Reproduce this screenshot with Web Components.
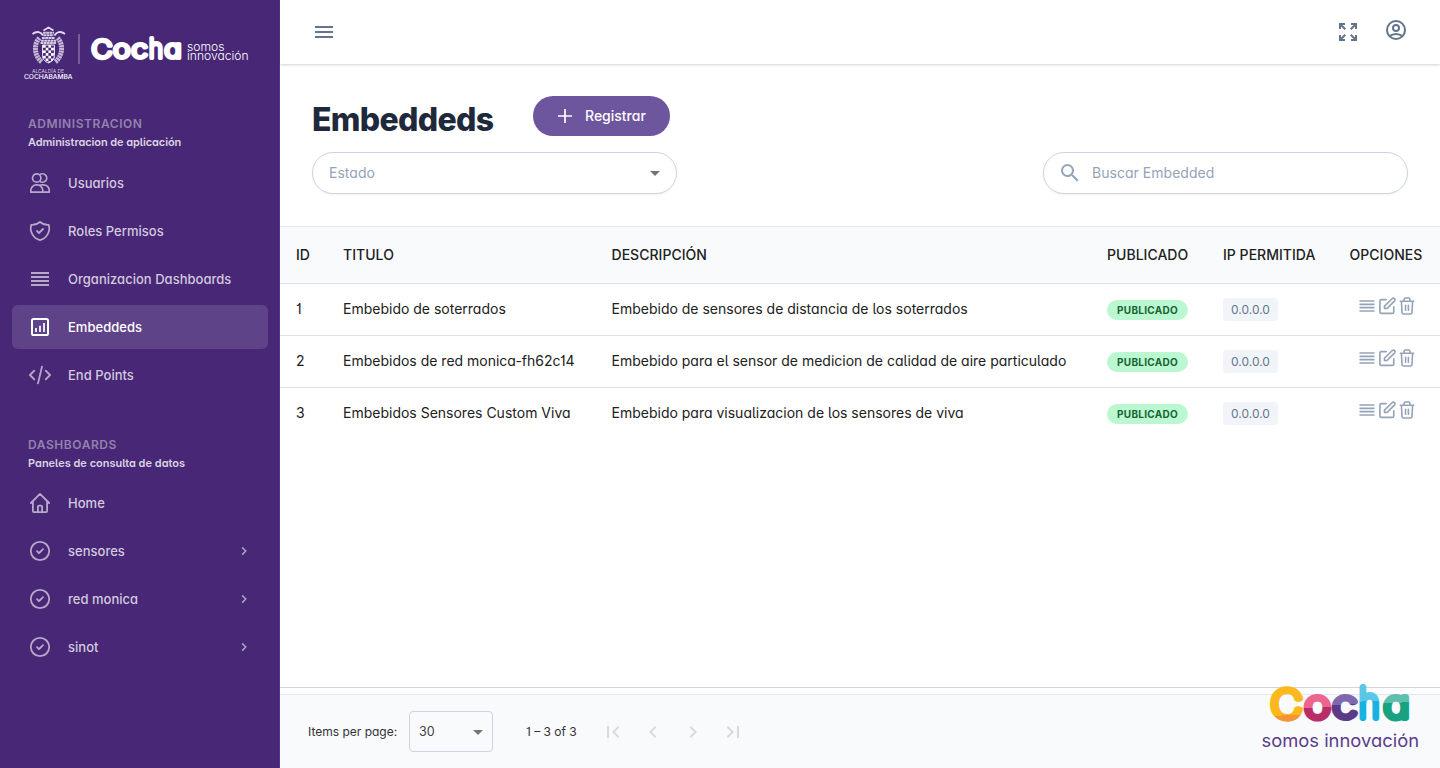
<!DOCTYPE html>
<html lang="es">
<head>
<meta charset="utf-8">
<title>Embeddeds</title>
<style>
  body{margin:0;height:768px;overflow:hidden;background:#fff;color:#1e293b;
    font:400 14px/20px Inter,"Liberation Sans",sans-serif;
    font-feature-settings:"cv11","cv01","cv05"}
</style>
</head>
<body>
<app-shell></app-shell>
<script>
const define=(name,html,init)=>customElements.define(name,class extends HTMLElement{
  constructor(){
    super();
    const t=document.createElement('template');
    t.innerHTML=html;
    this.attachShadow({mode:'open'}).appendChild(t.content.cloneNode(true));
  }
  connectedCallback(){ if(init) init(this,this.shadowRoot); }
});

const ICONS={
  users:'<g fill="none" stroke="currentColor" stroke-width="1.7" stroke-linejoin="round"><circle cx="8.700" cy="7" r="4.200"/><path d="M11.700 3.900A4.200 4.200 0 1 1 11.700 10.100M2.800 21.200v-1.700a5.600 5.600 0 0 1 5.600-5.600h.8a5.600 5.600 0 0 1 5.600 5.600v1.700zM11.500 14.400a5.400 5.400 0 0 1 3.300-.6h.8a5.600 5.600 0 0 1 5.600 5.600v1.800H15"/></g>',
  shield:'<path fill="none" stroke="currentColor" stroke-width="1.8" stroke-linecap="round" stroke-linejoin="round" d="M9 12l2 2 4-4M12 2.900a12 12 0 0 1-8.800 3 12.300 12.300 0 0 0 8.800 15.200 12.300 12.300 0 0 0 8.800-15.200A12 12 0 0 1 12 2.900z"/>',
  lines:'<path fill="currentColor" d="M3 5h18v2H3zm0 4h18v2H3zm0 4h18v2H3zm0 4h18v2H3z"/>',
  chart:'<rect x="4" y="4" width="16" height="16" rx="1.6" fill="none" stroke="currentColor" stroke-width="2"/><path fill="none" stroke="currentColor" stroke-width="1.7" d="M8 17v-4M12 17v-6.3M16 17V8"/>',
  code:'<path fill="none" stroke="currentColor" stroke-width="1.8" stroke-linecap="round" stroke-linejoin="round" d="M6.3 7.6L1.9 12l4.4 4.4M17.7 7.6l4.4 4.4-4.4 4.4M14 3.6l-4 16.8"/>',
  home:'<path fill="none" stroke="currentColor" stroke-width="1.8" stroke-linecap="round" stroke-linejoin="round" d="M2.9 12L12 2.900l9.100 9.100M4.900 10.300v9.800a1 1 0 0 0 1 1h12.200a1 1 0 0 0 1-1v-9.800M9.900 21v-5.400a1 1 0 0 1 1-1h2.200a1 1 0 0 1 1 1V21"/>',
  check:'<path fill="none" stroke="currentColor" stroke-width="1.8" stroke-linecap="round" stroke-linejoin="round" d="M9 12.200l2 2 4-4M21.200 12a9.200 9.200 0 1 1-18.400 0 9.200 9.200 0 0 1 18.400 0z"/>',
  chevron:'<path fill="none" stroke="currentColor" stroke-width="2.300" d="M9.2 6.6L14.6 12l-5.4 5.4"/>',
  menu:'<path fill="currentColor" d="M3 18h18v-2H3v2zm0-5h18v-2H3v2zm0-7v2h18V6H3z"/>',
  expand:'<path fill="currentColor" d="M3 3h6v2H6.400L10 8.600 8.600 10 5 6.400V9H3zM21 3h-6v2h2.600L14 8.600l1.400 1.400L19 6.400V9h2zM3 21h6v-2H6.400l3.600-3.600L8.600 14 5 17.600V15H3zM21 21h-6v-2h2.600L14 15.400l1.400-1.400 3.600 3.600V15h2z"/>',
  user:'<g fill="none" stroke="currentColor" stroke-width="2"><circle cx="12" cy="12" r="9"/><circle cx="12" cy="10" r="3"/><path d="M5.6 18.3C7.3 16.8 9.6 16 12 16s4.700.8 6.4 2.3"/></g>',
  plus:'<path fill="currentColor" d="M19 12.850h-6.150V19h-1.700v-6.150H5v-1.700h6.150V5h1.700v6.150H19z"/>',
  search:'<path fill="currentColor" d="M15.500 14h-.79l-.28-.27A6.471 6.471 0 0 0 16 9.500 6.500 6.500 0 1 0 9.500 16c1.610 0 3.090-.59 4.230-1.570l.27.28v.79l5 4.990L20.490 19l-4.990-5zm-6 0C7.010 14 5 11.990 5 9.500S7.010 5 9.500 5 14 7.010 14 9.500 11.990 14 9.500 14z"/>',
  arrow:'<path fill="currentColor" d="M7 10l5 5 5-5z"/>',
  edit:'<path fill="none" stroke="currentColor" stroke-width="2" stroke-linecap="round" stroke-linejoin="round" d="M11 4.300H5.300a1.800 1.800 0 0 0-1.800 1.800v13a1.800 1.800 0 0 0 1.800 1.800h13a1.800 1.800 0 0 0 1.800-1.800v-6M18.400 3a2 2 0 0 1 2.800 2.800L12 15H9v-3z"/>',
  trash:'<path fill="none" stroke="currentColor" stroke-width="1.900" stroke-linecap="round" stroke-linejoin="round" d="M4 6.300h16M8.500 6V3.800A1.500 1.500 0 0 1 10 2.300h4a1.500 1.500 0 0 1 1.500 1.500V6M5.300 6.500l.7 13.200a2 2 0 0 0 2 1.900h8a2 2 0 0 0 2-1.900l.7-13.200M10.300 11v6M13.700 11v6"/>',
  first:'<path fill="currentColor" d="M18.410 16.590L13.820 12l4.590-4.590L17 6l-6 6 6 6zM6 6h2v12H6z"/>',
  prev:'<path fill="currentColor" d="M15.410 7.410L14 6l-6 6 6 6 1.410-1.410L10.830 12z"/>',
  next:'<path fill="currentColor" d="M10 6L8.590 7.410 13.170 12l-4.580 4.590L10 18l6-6z"/>',
  last:'<path fill="currentColor" d="M5.590 7.410L10.180 12l-4.590 4.590L7 18l6-6-6-6zM16 6h2v12h-2z"/>'
};

define('app-icon','<style>:host{display:block;width:24px;height:24px;flex:none}svg{display:block;width:100%;height:100%}</style><svg viewBox="0 0 24 24"></svg>',
  (el,r)=>{r.querySelector('svg').innerHTML=ICONS[el.getAttribute('name')];});

define('brand-logo',`<style>:host{display:block;height:112px}svg{display:block}text{font-family:Inter,"Liberation Sans",sans-serif;fill:#fff}
.c text{font-size:25px;font-weight:200;stroke:#fff;stroke-width:4.100;stroke-linejoin:round;stroke-linecap:round;text-anchor:middle}</style>
<svg width="279" height="112" viewBox="0 0 279 112">
  <defs><pattern id="k" width="5.400" height="5.400" patternUnits="userSpaceOnUse" x="43" y="45"><rect width="2.700" height="2.700" fill="#fff"/><rect x="2.700" y="2.700" width="2.700" height="2.700" fill="#fff"/></pattern></defs>
  <g fill="none" stroke="#e4dcee">
    <path d="M43 35.500c-2-3.500-6-5-10.500-1.500M54.500 35.500c2-3.500 6-5 10.500-1.500" stroke-width="1.800"/>
    <path d="M39.500 38c-6 6-5.500 18 2.500 24M57.500 38c6 6 5.500 18-2.500 24" stroke-width="5" stroke-dasharray="2.200 .5" stroke-opacity=".8"/>
    <path d="M43.500 30.500l2.500-1.500 2.500-1.500 2.500 1.500 2.500 1.500" stroke-width="1.800"/>
    <path d="M43 32.800h11M43.500 35.300h10M42 38h13M41 40.800h15M40.500 43h16" stroke-width="2.100" stroke-dasharray="2.800 .4" stroke-opacity=".9"/>
    <path d="M42.500 45h12v10.500c0 4-2.500 6-6 7.500-3.500-1.500-6-3.500-6-7.500z" fill="url(#k)" stroke-width="1"/>
  </g>
  <path d="M79 34v30" stroke="#fff" stroke-opacity=".5"/>
  <text x="32" y="72.500" font-size="5" textLength="32" lengthAdjust="spacingAndGlyphs" fill-opacity=".75">ALCALDÍA DE</text>
  <text x="24" y="78.700" font-size="5.800" font-weight="500" textLength="48.500" lengthAdjust="spacingAndGlyphs">COCHABAMBA</text>
  <g class="c"><text x="102" y="57.800" textLength="20.800" lengthAdjust="spacingAndGlyphs">C</text><text x="121.700" y="57.800" textLength="17" lengthAdjust="spacingAndGlyphs">o</text><text x="139.500" y="57.800" textLength="16" lengthAdjust="spacingAndGlyphs">c</text><text x="155.900" y="57.800" textLength="14" lengthAdjust="spacingAndGlyphs" style="font-size:26.500px">h</text><text x="173.100" y="57.800" textLength="17" lengthAdjust="spacingAndGlyphs">a</text></g>
  <text x="187" y="51" font-size="11" font-weight="300" textLength="37.500" lengthAdjust="spacingAndGlyphs">somos</text>
  <text x="187" y="60" font-size="11" font-weight="300" textLength="61.500" lengthAdjust="spacingAndGlyphs">innovación</text>
</svg>`);

define('nav-item',`<style>
:host{display:flex;align-items:center;gap:16px;height:44px;margin:0 11px 4px 12px;padding:0 16px;box-sizing:border-box;border-radius:6px;color:#d3cadd;font-size:13px;font-weight:500}
:host([active]){background:#5f4388;color:#fff}
app-icon{color:#b6a9c9}:host([active]) app-icon{color:#fff}
.t{flex:1;letter-spacing:.02px}.c{width:16px;height:16px;color:#a9a3c4}:host([open-mark]) .c{display:block}:host(:not([open-mark])) .c{display:none}
</style><app-icon class="i"></app-icon><span class="t"><slot></slot></span><app-icon class="c" name="chevron"></app-icon>`,
(el,r)=>{const i=document.createElement('app-icon');i.setAttribute('name',el.getAttribute('icon'));r.querySelector('.i').replaceWith(i);});

define('nav-group',`<style>:host{display:block}
.h{font-size:12px;line-height:20px;font-weight:600;letter-spacing:.57px;color:#9382ae;padding-left:28px}
.s{font-size:11px;line-height:16px;font-weight:600;color:#dad3e3;padding-left:28px;letter-spacing:var(--sub-spacing,-.08px)}
.l{padding-top:var(--list-gap,11px)}</style>
<div class="h"><slot name="title"></slot></div><div class="s"><slot name="sub"></slot></div><div class="l"><slot></slot></div>`);

define('side-bar',`<style>:host{display:block;width:280px;height:768px;box-sizing:border-box;background:#482777;border-right:1px solid #55368a;flex:none}
nav-group{padding-top:2px}nav-group+nav-group{padding-top:34px;--list-gap:10px;--sub-spacing:0}</style>
<brand-logo></brand-logo>
<nav-group><span slot="title">ADMINISTRACION</span><span slot="sub">Administracion de aplicación</span>
<nav-item icon="users">Usuarios</nav-item><nav-item icon="shield">Roles Permisos</nav-item><nav-item icon="lines">Organizacion Dashboards</nav-item><nav-item icon="chart" active>Embeddeds</nav-item><nav-item icon="code">End Points</nav-item></nav-group>
<nav-group><span slot="title">DASHBOARDS</span><span slot="sub">Paneles de consulta de datos</span>
<nav-item icon="home">Home</nav-item><nav-item icon="check" open-mark>sensores</nav-item><nav-item icon="check" open-mark>red monica</nav-item><nav-item icon="check" open-mark>sinot</nav-item></nav-group>`);

define('top-bar',`<style>:host{display:flex;align-items:center;height:64px;padding:0 32px;box-shadow:0 1px 3px rgba(0,0,0,.1),0 1px 2px rgba(0,0,0,.08);color:#64748b;position:relative;box-sizing:border-box}
.sp{flex:1}.u{margin-left:24px;margin-bottom:4px}</style>
<app-icon name="menu"></app-icon><span class="sp"></span><app-icon name="expand"></app-icon><app-icon class="u" name="user"></app-icon>`);

define('pill-field',`<style>:host{display:flex;align-items:center;width:365px;height:42px;box-sizing:border-box;border:1px solid #cbd5e1;border-radius:21px;padding:0 16px;color:#94a3b8;box-shadow:0 1px 2px rgba(0,0,0,.05);background:#fff;letter-spacing:.03px}
::slotted(app-icon[name=search]){margin:0 10px 0 -2px}
::slotted(app-icon[name=arrow]){color:#757575;margin-left:auto;margin-right:-7px}</style><slot></slot>`);

define('page-header',`<style>:host{display:block;height:162px;padding:32px 32px 0;box-sizing:border-box}
.r{display:flex;height:40px;align-items:center;gap:39px}
h1{margin:0;width:182px;font-size:32px;line-height:40px;font-weight:800;letter-spacing:-.7px;color:#1e293b;padding-top:8px}
button{width:137px;height:40px;border:0;border-radius:20px;background:#6d569e;color:#fff;font:500 14px/20px Inter,"Liberation Sans",sans-serif;font-feature-settings:inherit;display:flex;align-items:center;padding:0 20px;gap:8px}
.f{display:flex;justify-content:space-between;margin-top:16px}</style>
<div class="r"><h1>Embeddeds</h1><button><app-icon name="plus"></app-icon>Registrar</button></div>
<div class="f"><pill-field>Estado<app-icon name="arrow"></app-icon></pill-field><pill-field><app-icon name="search"></app-icon>Buscar Embedded</pill-field></div>`);

const COLS='display:grid;grid-template-columns:47px 268.5px 495.500px 116px 126.500px 1fr;padding-left:16px;box-sizing:border-box;';
define('table-row',`<style>:host{${COLS}height:52px;border-bottom:1px solid #e0e0e0;color:#212121;line-height:20px}
:host(:last-of-type){border-bottom:0}
.t{padding-top:15px}
.b{margin-top:16px;width:81px;height:20px;border-radius:10px;background:#bbf7d0;color:#166534;font-size:10px;font-weight:700;letter-spacing:.28px;display:flex;align-items:center;justify-content:center}
.p{margin-top:14px;width:55px;height:23px;border-radius:4px;background:#f1f5f9;color:#64748b;font-size:12px;font-weight:400;display:flex;align-items:center;justify-content:center}
.o{display:flex;padding:12px 0 0 7.500px;color:#94a3b8}.o app-icon{width:20px;height:20px}</style>
<span class="t id"></span><span class="t ti"></span><span class="t de"></span><span class="b">PUBLICADO</span><span class="p">0.0.0.0</span><span class="o"><app-icon name="lines"></app-icon><app-icon name="edit"></app-icon><app-icon name="trash"></app-icon></span>`,
(el,r)=>{r.querySelector('.id').textContent=el.getAttribute('rid');r.querySelector('.ti').textContent=el.getAttribute('titulo');r.querySelector('.de').textContent=el.getAttribute('descripcion');});

define('data-table',`<style>:host{display:block;height:462px;box-sizing:border-box;border-bottom:1px solid #d4d4d4}
.h{${COLS}height:58px;align-items:center;background:#f8fafc;border-top:1px solid #e2e8f0;border-bottom:1px solid #e0e0e0;color:#212121;font-weight:550;letter-spacing:.03px}</style>
<div class="h"><span>ID</span><span>TITULO</span><span>DESCRIPCIÓN</span><span>PUBLICADO</span><span>IP PERMITIDA</span><span>OPCIONES</span></div>
<table-row rid="1" titulo="Embebido de soterrados" descripcion="Embebido de sensores de distancia de los soterrados"></table-row>
<table-row rid="2" titulo="Embebidos de red monica-fh62c14" descripcion="Embebido para el sensor de medicion de calidad de aire particulado"></table-row>
<table-row rid="3" titulo="Embebidos Sensores Custom Viva" descripcion="Embebido para visualizacion de los sensores de viva"></table-row>`);

define('page-footer',`<style>:host{display:flex;align-items:center;height:74px;margin-top:6px;border-top:1px solid #e2e8f0;background:#f8fafc;box-sizing:border-box;padding-left:28px;font-size:12px;color:#333}
.l{width:101px}.s{width:84px;height:41px;box-sizing:border-box;border:1px solid #cbd5e1;border-radius:4px;display:flex;align-items:center;padding-left:9px;justify-content:space-between;color:#424242;font-size:12.500px}
.s app-icon{color:#757575;margin-right:2px}.n{margin-left:33px;width:75px}.p{width:40px;color:#d8dadc;display:flex}</style>
<span class="l">Items per page:</span><span class="s">30<app-icon name="arrow"></app-icon></span><span class="n">1 – 3 of 3</span>
<span class="p"><app-icon name="first"></app-icon></span><span class="p"><app-icon name="prev"></app-icon></span><span class="p"><app-icon name="next"></app-icon></span><span class="p"><app-icon name="last"></app-icon></span>`);

const band=(id,a,b,y)=>`<linearGradient id="${id}" gradientUnits="userSpaceOnUse" x1="0" y1="0" x2="4" y2="80"><stop offset="${y/80}" stop-color="${a}"/><stop offset="${y/80}" stop-color="${b}"/></linearGradient>`;
define('cocha-mark',`<style>:host{position:absolute;right:0;bottom:0;width:190px;height:93px}svg{display:block}text{font-family:Inter,"Liberation Sans",sans-serif}
.c text{font-size:38.500px;font-weight:200;stroke-width:6;stroke-linejoin:round;stroke-linecap:round;text-anchor:middle}</style>
<svg width="190" height="93" viewBox="0 0 190 93"><defs>
${band('g1','#fcb81c','#f3943a',42)}${band('g2','#ec6590','#b92d68',36)}${band('g3','#7f68ae','#5a3b88',34)}${band('g4','#5bc7e6','#18b2e0',32)}${band('g5','#5fbfaf','#18a281',35)}</defs>
<g class="c"><text x="36.500" y="42.600" textLength="32" lengthAdjust="spacingAndGlyphs" fill="url(#g1)" stroke="url(#g1)">C</text><text x="67.500" y="42.600" textLength="26" lengthAdjust="spacingAndGlyphs" fill="url(#g2)" stroke="url(#g2)">o</text><text x="94.800" y="42.600" textLength="24.500" lengthAdjust="spacingAndGlyphs" fill="url(#g3)" stroke="url(#g3)">c</text><text x="119.200" y="42.600" textLength="21" lengthAdjust="spacingAndGlyphs" fill="url(#g4)" stroke="url(#g4)" style="font-size:42px">h</text><text x="146.500" y="42.600" textLength="26" lengthAdjust="spacingAndGlyphs" fill="url(#g5)" stroke="url(#g5)">a</text></g>
<text x="11.500" y="71.500" font-size="17.500" font-weight="400" fill="#5b3c8b" textLength="157.500" lengthAdjust="spacingAndGlyphs">somos innovación</text></svg>`);

define('app-shell',`<style>:host{display:flex;width:1440px;height:768px;position:relative}
main{flex:1;min-width:0;background:#fff}</style>
<side-bar></side-bar><main><top-bar></top-bar><page-header></page-header><data-table></data-table><page-footer></page-footer></main><cocha-mark></cocha-mark>`);
</script>
</body>
</html>
